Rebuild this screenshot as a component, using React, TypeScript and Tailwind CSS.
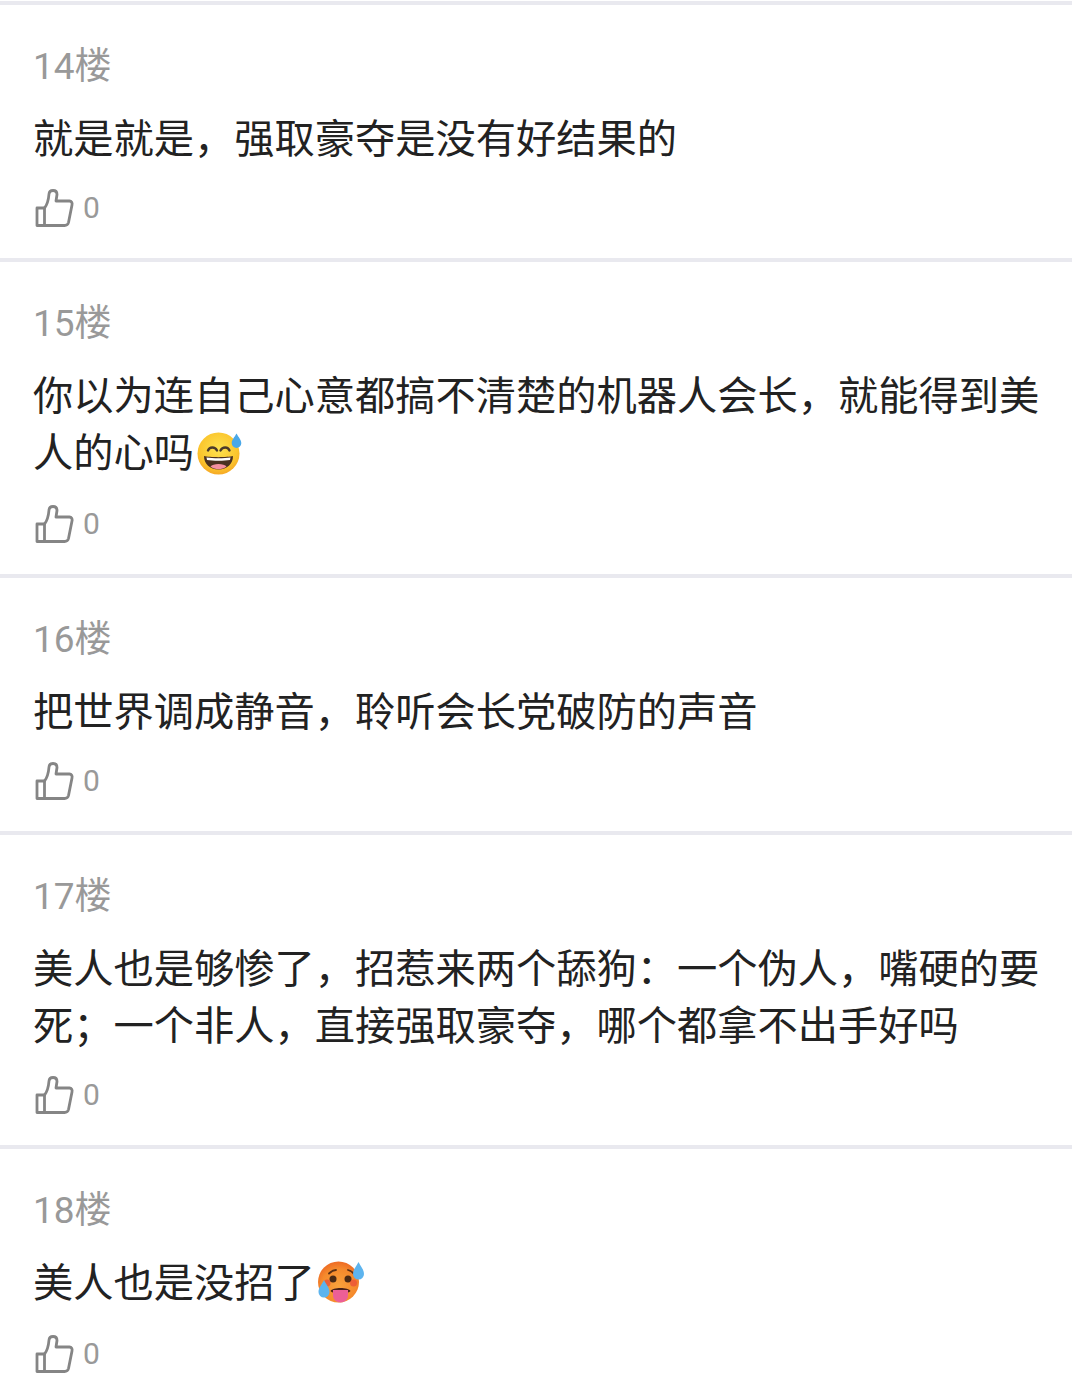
import type { ReactNode } from 'react';

function ThumbIcon() {
  return (
    <svg width="40" height="40" viewBox="0 0 40 40" fill="none" stroke="#858585" strokeWidth="2.8" strokeLinejoin="round" strokeLinecap="round" className="shrink-0 overflow-visible">
      <path d="M4 20h7.500v17.500H4z" />
      <path d="M11.500 20C14 17 15.500 12 16 6c.2-2.500 2-3.500 4-3.500 2.500 0 4 1.500 4 4L23 13h13.500c2 0 3 2 2.500 4L35.500 34.500c-.5 2-2 3-4 3H11.500" />
    </svg>
  );
}

function SweatSmile() {
  return (
    <svg width="48" height="44" viewBox="0 0 48 44" className="inline-block align-[-9px] ml-[1px]">
      <defs>
        <radialGradient id="smileFace" cx="50%" cy="40%" r="60%">
          <stop offset="0%" stopColor="#fde24f" />
          <stop offset="75%" stopColor="#fbc52d" />
          <stop offset="100%" stopColor="#f6a925" />
        </radialGradient>
      </defs>
      <circle cx="23.500" cy="21.500" r="21" fill="url(#smileFace)" />
      <path d="M13 18.500c1.500-4 7-4 9 0M25.500 18.500c2-4 7.500-4 9 0" fill="none" stroke="#4b3a2a" strokeWidth="2.400" strokeLinecap="round" />
      <path d="M9 24c5 1.500 24 1.500 29 0 0 8-6 13.500-14.500 13.500S9 32 9 24z" fill="#4a3020" />
      <path d="M11.500 25.500c6 1 18 1 24 0l-.5 2.500c-6 1-17 1-23 0z" fill="#fff" />
      <path d="M15.500 34.500c2-3.500 14-3.500 16 0-4.500 3.500-11.500 3.500-16 0z" fill="#f48fa0" />
      <path d="M41.500 1.500c2 3.800 4.800 6.300 4.800 9.700a4.800 4.800 0 0 1-9.600 0c0-3.400 2.800-5.900 4.800-9.700z" fill="#4aa8e8" />
    </svg>
  );
}

function HotFace() {
  return (
    <svg width="48" height="46" viewBox="0 0 48 46" className="inline-block align-[-9px] ml-[1px]">
      <defs>
        <radialGradient id="hotFaceFill" cx="50%" cy="60%" r="60%">
          <stop offset="0%" stopColor="#f9a33c" />
          <stop offset="70%" stopColor="#f58a2c" />
          <stop offset="100%" stopColor="#ee6a24" />
        </radialGradient>
      </defs>
      <circle cx="22.500" cy="22" r="20.500" fill="url(#hotFaceFill)" />
      <path d="M13 13.500c2-2 5-3.500 7-3.500M38 14c-2-2.500-4-3.500-6-4" fill="none" stroke="#5a2f14" strokeWidth="1.800" strokeLinecap="round" />
      <circle cx="17" cy="19" r="3.500" fill="#4a2a14" />
      <circle cx="32" cy="19" r="3.500" fill="#4a2a14" />
      <circle cx="11" cy="23" r="3.500" fill="#ea4a3a" opacity="0.7" />
      <circle cx="37.500" cy="23" r="3.500" fill="#ea4a3a" opacity="0.7" />
      <path d="M14.500 31c2-4 18-4 20 0-1 1-2 1.500-4 1.500H18c-1.500 0-2.500-.5-3.500-1.500z" fill="#4a2118" />
      <path d="M17 30h15v6a7.500 6.500 0 0 1-15 0z" fill="#ec5f96" />
      <path d="M42.500 2c2.300 5 5.500 7.500 5.500 12a5.500 5.500 0 0 1-11 0c0-4.500 3.200-7 5.500-12z" fill="#5db4ee" />
      <path d="M8 20c2.300 5 5.500 7.500 5.500 12a5.500 5.500 0 0 1-11 0c0-4.500 3.200-7 5.500-12z" fill="#5db4ee" />
    </svg>
  );
}

function Comment({ floor, likes, gap = 'mt-[20px]', children }: { floor: string; likes: number; gap?: string; children: ReactNode }) {
  return (
    <div className="border-t-4 border-[#e9e9ef] pl-[33px] pr-[24px] pt-[37px] pb-[30px]">
      <div className="text-[37px] leading-[50px] text-[#999999]">{floor}</div>
      <div className="mt-[19px] text-[40.25px] leading-[57px] text-[#222222]">{children}</div>
      <div className={`${gap} flex items-center gap-[10px] h-[40px]`}>
        <ThumbIcon />
        <span className="text-[30px] leading-[40px] text-[#999999]">{likes}</span>
      </div>
    </div>
  );
}

export default function App() {
  return (
    <div className="min-h-[1400px] bg-white pt-[1px] font-['Roboto','Noto_Sans_CJK_SC',sans-serif]">
      <Comment floor="14楼" likes={0}>就是就是，强取豪夺是没有好结果的</Comment>
      <Comment floor="15楼" likes={0} gap="mt-[22px]">
        你以为连自己心意都搞不清楚的机器人会长，就能得到美人的心吗
        <SweatSmile />
      </Comment>
      <Comment floor="16楼" likes={0}>把世界调成静音，聆听会长党破防的声音</Comment>
      <Comment floor="17楼" likes={0}>美人也是够惨了，招惹来两个舔狗：一个伪人，嘴硬的要死；一个非人，直接强取豪夺，哪个都拿不出手好吗</Comment>
      <Comment floor="18楼" likes={0} gap="mt-[22px]">
        美人也是没招了
        <HotFace />
      </Comment>
    </div>
  );
}
